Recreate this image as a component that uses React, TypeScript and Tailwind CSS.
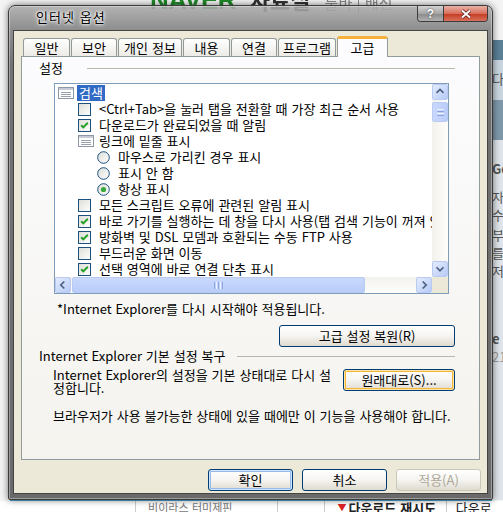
import React from "react";

type Row = {
  level: 0 | 1 | 2;
  kind: "group" | "check" | "radio";
  on?: boolean;
  selected?: boolean;
  label: string;
};

const rows: Row[] = [
  { level: 0, kind: "group", label: "검색", selected: true },
  { level: 1, kind: "check", on: false, label: "<Ctrl+Tab>을 눌러 탭을 전환할 때 가장 최근 순서 사용" },
  { level: 1, kind: "check", on: true, label: "다운로드가 완료되었을 때 알림" },
  { level: 1, kind: "group", label: "링크에 밑줄 표시" },
  { level: 2, kind: "radio", on: false, label: "마우스로 가리킨 경우 표시" },
  { level: 2, kind: "radio", on: false, label: "표시 안 함" },
  { level: 2, kind: "radio", on: true, label: "항상 표시" },
  { level: 1, kind: "check", on: false, label: "모든 스크립트 오류에 관련된 알림 표시" },
  { level: 1, kind: "check", on: true, label: "바로 가기를 실행하는 데 창을 다시 사용(탭 검색 기능이 꺼져 있는 경우)" },
  { level: 1, kind: "check", on: true, label: "방화벽 및 DSL 모뎀과 호환되는 수동 FTP 사용" },
  { level: 1, kind: "check", on: false, label: "부드러운 화면 이동" },
  { level: 1, kind: "check", on: true, label: "선택 영역에 바로 연결 단추 표시" },
];

const indent = ["pl-[3px]", "pl-[23px]", "pl-[42px]"];

function Check({ on }: { on?: boolean }) {
  return (
    <svg width="13" height="13" viewBox="0 0 13 13">
      <defs>
        <linearGradient id="cb" x1="0" y1="0" x2="1" y2="1">
          <stop offset="0" stopColor="#dcdcd7" />
          <stop offset="1" stopColor="#ffffff" />
        </linearGradient>
      </defs>
      <rect x="0.5" y="0.5" width="12" height="12" fill="url(#cb)" stroke="#1c5180" />
      {on && <path d="M3.2 6.2 L5.3 8.4 L9.8 3.8" fill="none" stroke="#21a121" strokeWidth="2" />}
    </svg>
  );
}

function Radio({ on }: { on?: boolean }) {
  return (
    <svg width="13" height="13" viewBox="0 0 13 13">
      <defs>
        <linearGradient id="rb" x1="0" y1="0" x2="1" y2="1">
          <stop offset="0" stopColor="#dcdcd7" />
          <stop offset="1" stopColor="#ffffff" />
        </linearGradient>
      </defs>
      <circle cx="6.5" cy="6.5" r="5.8" fill="url(#rb)" stroke="#1c5180" />
      {on && <circle cx="6.5" cy="6.5" r="2.6" fill="#3aa83a" />}
    </svg>
  );
}

function GroupIcon() {
  return (
    <svg width="16" height="12" viewBox="0 0 16 12">
      <rect x="0.5" y="0.5" width="15" height="11" fill="#ffffff" stroke="#8d98a4" />
      <rect x="1" y="1" width="14" height="2" fill="#c5ccd6" />
      <path d="M3 5.5 H13 M3 7.5 H13 M3 9.5 H13" stroke="#9aa3ad" />
    </svg>
  );
}

function Arrow({ dir }: { dir: "up" | "down" | "left" | "right" }) {
  const d = {
    up: "M4 9 L8 5 L12 9",
    down: "M4 6 L8 10 L12 6",
    left: "M9.5 4 L5.5 8 L9.5 12",
    right: "M6.5 4 L10.5 8 L6.5 12",
  }[dir];
  return (
    <svg width="16" height="16" viewBox="0 0 16 16">
      <path d={d} fill="none" stroke="#4d6185" strokeWidth="2" />
    </svg>
  );
}

function ScrollBtn({ dir }: { dir: "up" | "down" | "left" | "right" }) {
  return (
    <div className="w-[16px] h-[16px] shrink-0 rounded-[2px] border border-[#b9cbf3] bg-gradient-to-br from-[#e4ecfd] to-[#b7cbf7] flex items-center justify-center">
      <Arrow dir={dir} />
    </div>
  );
}

function XpButton({
  children,
  className,
  tone = "normal",
}: {
  children: React.ReactNode;
  className: string;
  tone?: "normal" | "default" | "hot" | "disabled";
}) {
  const tones = {
    normal: "border-[#003c74] text-black",
    default: "border-[#003c74] text-black shadow-[inset_0_0_0_1px_#cee7ff,inset_0_0_0_2px_#98b8ea]",
    hot: "border-[#003c74] text-black shadow-[inset_0_0_0_1px_#fce7a4,inset_0_0_0_2px_#f7b33b]",
    disabled: "border-[#c9c7ba] text-[#aca899]",
  };
  return (
    <div
      className={
        "flex items-center justify-center rounded-[3px] border bg-gradient-to-b from-[#ffffff] via-[#f5f4f0] to-[#dedbd0] " +
        tones[tone] +
        " " +
        className
      }
    >
      {children}
    </div>
  );
}

const tabs = [
  { label: "일반", w: "w-[47px]" },
  { label: "보안", w: "w-[46px]" },
  { label: "개인 정보", w: "w-[64px]" },
  { label: "내용", w: "w-[47px]" },
  { label: "연결", w: "w-[46px]" },
  { label: "프로그램", w: "w-[58px]" },
];

export default function App() {
  return (
    <div className="relative w-[503px] h-[512px] overflow-hidden bg-[#f4f4f4] font-['Noto_Sans_CJK_KR',sans-serif] text-[13px] leading-[16px] [word-spacing:1px] text-black">
      {/* web page behind the dialog */}
      <div className="absolute left-[150px] top-[-9px] flex items-baseline gap-[14px] blur-[0.6px]">
        <span className="text-[26px] font-black text-[#1f8a2a] tracking-tight font-['Liberation_Sans',sans-serif]">NAVER</span>
        <span className="text-[22px] font-bold text-[#333]">자료실</span>
        <span className="text-[15px] text-[#888]">툴바 | 배신</span>
      </div>
      <div className="absolute left-[492px] top-[40px] w-[11px] h-[460px] bg-[#dfe5ea] flex flex-col text-[13px] leading-[18px] text-[#555]">
        <div className="h-[20px] bg-[#5b7f95]" />
        <div className="h-[40px] bg-[#c9d6df] pt-[10px]">다</div>
        <div className="h-[40px] bg-[#7f99aa]" />
        <div className="pt-[20px] font-bold">Go</div>
        <div className="pt-[10px]">자</div>
        <div>수</div>
        <div className="pt-[2px]">부</div>
        <div>를</div>
        <div>저</div>
        <div className="pt-[50px] font-bold">e</div>
        <div className="text-[#999]">21</div>
      </div>
      <div className="absolute left-[10px] top-[499px] w-[482px] h-[2px] bg-[#4ea6cf]" />
      <div className="absolute left-[0px] top-[501px] w-[503px] h-[11px] bg-white flex text-[13px] leading-[13px]">
        <div className="w-[138px] border-r border-[#ccc]" />
        <div className="w-[144px] border-r border-[#ccc] pl-[12px] text-[#777] text-[11px]">비이라스 터미제핀</div>
        <div className="w-[48px] border-r border-[#ccc]" />
        <div className="w-[123px] border-r border-[#ccc] pl-[12px] font-bold text-[#222] flex">
          <span className="text-[#d22] text-[9px] mr-[2px]">▼</span>다운로드 재시도
        </div>
        <div className="pl-[9px] text-[#222]">다운로드</div>
      </div>

      {/* dialog window */}
      <div className="absolute left-[8px] top-[5px] w-[485px] h-[495px] rounded-t-[7px] rounded-b-[2px] border border-[#3b3b3b] bg-[linear-gradient(180deg,rgba(170,170,170,0.88)_0px,rgba(130,130,130,0.9)_24px,rgba(108,108,108,0.96)_60px,#6a6a6a_100%)] shadow-[0_0_7px_rgba(0,0,0,0.55),inset_0_0_0_1px_rgba(255,255,255,0.35)] flex flex-col">
        {/* title bar */}
        <div className="h-[24px] flex items-start">
          <div className="pl-[27px] pt-[3px] text-[13px] tracking-[1px] leading-[16px] text-black [text-shadow:0_0_5px_#fff,0_0_3px_#fff,0_0_2px_#fff]">
            인터넷 옵션
          </div>
          <div className="flex-1" />
          <div className="mr-[4px] flex h-[16px] rounded-b-[4px] border border-t-0 border-[#3c3c3c] overflow-hidden">
            <div className="w-[26px] bg-[linear-gradient(180deg,#d4d4d4,#a5a5a5_50%,#8a8a8a_51%,#b0b0b0)] border-r border-[#3c3c3c] flex items-center justify-center text-white font-bold text-[12px] font-['Liberation_Sans',sans-serif] [text-shadow:0_0_2px_#333]">
              ?
            </div>
            <div className="w-[43px] bg-[linear-gradient(180deg,#eab2a6,#d86f5c_50%,#c4391f_51%,#d9705c)] flex items-center justify-center">
              <svg width="12" height="10" viewBox="0 0 12 10">
                <path d="M2 1.5 L10 8.5 M10 1.5 L2 8.5" stroke="#5a1a10" strokeWidth="3.4" />
                <path d="M2 1.5 L10 8.5 M10 1.5 L2 8.5" stroke="#ffffff" strokeWidth="2" />
              </svg>
            </div>
          </div>
        </div>

        {/* client area */}
        <div className="ml-[4px] w-[475px] h-[464px] border border-[#444] bg-[#ece9d8] flex flex-col">
          {/* tabs */}
          <div className="mt-[5px] ml-[9px] h-[20px] flex items-end gap-[1px]">
            {tabs.map((t) => (
              <div
                key={t.label}
                className={
                  t.w +
                  " h-[18px] rounded-t-[3px] border border-b-0 border-[#919b9c] bg-gradient-to-b from-white to-[#ecebe6] flex items-center justify-center"
                }
              >
                {t.label}
              </div>
            ))}
            <div className="relative z-10 w-[51px] h-[21px] -mb-[1px] rounded-t-[3px] border-x border-[#919b9c] border-t-[3px] border-t-[#f6b03c] bg-[#fcfcfe] flex items-center justify-center">
              고급
            </div>
          </div>

          {/* tab page */}
          <div className="ml-[7px] w-[459px] h-[404px] border border-[#919b9c] bg-gradient-to-b from-[#fcfcfe] to-[#f4f3ee] flex flex-col">
            <div className="mt-[3px] flex items-center h-[16px]">
              <span className="ml-[17px]">설정</span>
              <div className="ml-[24px] mr-[24px] flex-1 h-[1px] bg-[#b9b8ae]" />
            </div>

            {/* list box */}
            <div className="mt-[7px] ml-[32px] w-[395px] h-[211px] border border-[#7f9db9] bg-white flex flex-col">
              <div className="flex flex-1 min-h-0">
                <div className="flex-1 overflow-hidden pt-[1px] whitespace-nowrap">
                  {rows.map((r, i) => (
                    <div key={i} className={"h-[16px] flex items-center " + indent[r.level]}>
                      <div className="w-[19px] shrink-0 flex items-center">
                        {r.kind === "group" && <GroupIcon />}
                        {r.kind === "check" && <Check on={r.on} />}
                        {r.kind === "radio" && <Radio on={r.on} />}
                      </div>
                      <span
                        className={
                          r.selected
                            ? "inline-block h-[16px] px-[2px] bg-[#316ac5] text-white"
                            : "inline-block h-[16px] px-[2px]"
                        }
                      >
                        {r.label}
                      </span>
                    </div>
                  ))}
                </div>
                <div className="w-[16px] shrink-0 bg-gradient-to-r from-[#f3f1ec] to-[#fefefb] flex flex-col">
                  <ScrollBtn dir="up" />
                  <div className="mt-[2px] h-[20px] rounded-[2px] border border-[#b9cbf3] bg-gradient-to-r from-[#cad8fc] to-[#b9cdf9] flex flex-col items-center justify-center gap-[1px]">
                    <div className="w-[7px] h-[1px] bg-[#eef3ff]" />
                    <div className="w-[7px] h-[1px] bg-[#8ca6e0]" />
                    <div className="w-[7px] h-[1px] bg-[#eef3ff]" />
                    <div className="w-[7px] h-[1px] bg-[#8ca6e0]" />
                  </div>
                  <div className="flex-1" />
                  <ScrollBtn dir="down" />
                </div>
              </div>
              <div className="h-[16px] flex bg-gradient-to-b from-[#f3f1ec] to-[#fefefb]">
                <ScrollBtn dir="left" />
                <div className="ml-[1px] w-[293px] rounded-[2px] border border-[#b9cbf3] bg-gradient-to-b from-[#cad8fc] to-[#b9cdf9] flex items-center justify-center gap-[1px]">
                  <div className="w-[1px] h-[7px] bg-[#8ca6e0]" />
                  <div className="w-[1px] h-[7px] bg-[#eef3ff]" />
                  <div className="w-[1px] h-[7px] bg-[#8ca6e0]" />
                  <div className="w-[1px] h-[7px] bg-[#eef3ff]" />
                  <div className="w-[1px] h-[7px] bg-[#8ca6e0]" />
                </div>
                <div className="flex-1" />
                <ScrollBtn dir="right" />
                <div className="w-[16px] bg-[#ece9d8]" />
              </div>
            </div>

            <div className="mt-[7px] ml-[35px] h-[16px]">*Internet Explorer를 다시 시작해야 적용됩니다.</div>

            <div className="mt-[8px] mr-[24px] flex justify-end">
              <XpButton className="w-[176px] h-[22px]">고급 설정 복원(R)</XpButton>
            </div>

            <div className="mt-[1px] flex items-center h-[16px]">
              <span className="ml-[17px]">Internet Explorer 기본 설정 복구</span>
              <div className="ml-[12px] mr-[24px] flex-1 h-[1px] bg-[#b9b8ae]" />
            </div>

            <div className="mt-[3px] ml-[31px] mr-[24px] flex items-start">
              <div className="flex-1 leading-[13px] pt-[1px]">
                Internet Explorer의 설정을 기본 상태대로 다시 설
                <br />
                정합니다.
              </div>
              <XpButton tone="hot" className="mt-[2px] w-[112px] h-[22px]">
                원래대로(S)...
              </XpButton>
            </div>

            <div className="mt-[14px] ml-[31px] h-[16px]">
              브라우저가 사용 불가능한 상태에 있을 때에만 이 기능을 사용해야 합니다.
            </div>
          </div>

          {/* dialog buttons */}
          <div className="mt-[9px] mr-[6px] flex justify-end gap-[9px]">
            <XpButton tone="default" className="w-[85px] h-[22px]">확인</XpButton>
            <XpButton className="w-[85px] h-[22px]">취소</XpButton>
            <XpButton tone="disabled" className="w-[85px] h-[22px]">적용(A)</XpButton>
          </div>
        </div>
      </div>
    </div>
  );
}
